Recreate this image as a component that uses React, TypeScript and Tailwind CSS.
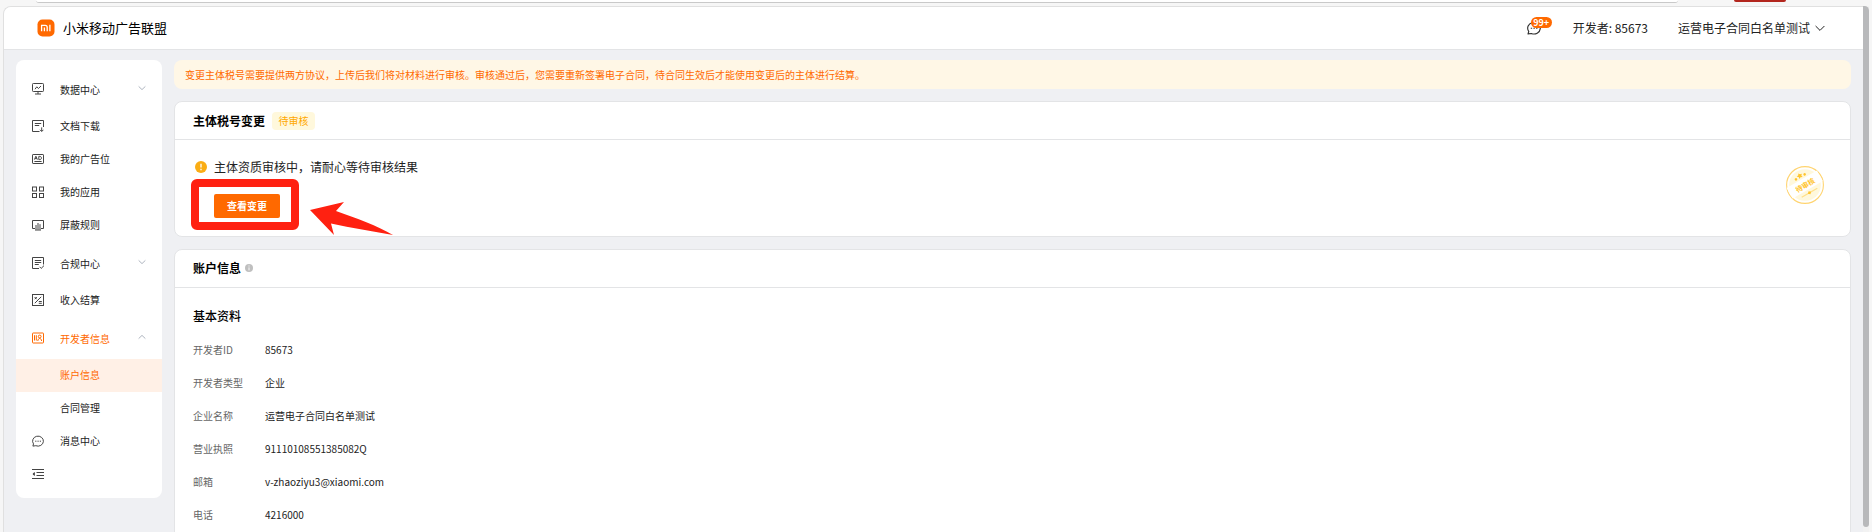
import { useState } from "react"
import type { ReactNode } from "react"

type IconProps = { children: ReactNode; className?: string }

const Icon = ({ children, className = "size-3" }: IconProps) => (
  <svg
    viewBox="0 0 12 12"
    className={`${className} shrink-0`}
    fill="none"
    stroke="currentColor"
    strokeWidth="1"
    aria-hidden="true"
  >
    {children}
  </svg>
)

const icons: Record<string, ReactNode> = {
  data: (
    <>
      <rect x="0.5" y="0.5" width="11" height="8" rx="0.8" />
      <path d="M3 6.2 4.8 3.8l1.6 1.7L9 3M6 8.500v2.500M3 11h6" />
    </>
  ),
  docs: (
    <>
      <path d="M11.500 7V0.500H0.500v11h7M2.800 3.500h6.400M2.800 5.500h4.400" />
      <path d="M9.700 7.400v3.800M8 9.800l1.700 1.700 1.700-1.700" />
    </>
  ),
  adSlot: (
    <>
      <rect x="0.5" y="1.5" width="11" height="9" rx="0.6" />
      <path d="M2.4 6.6 3.9 3.2l1.5 3.400M3 5.600h1.900M6.800 3.400v3.200h1c2.200 0 2.200-3.200 0-3.200zM2.400 8.500h7.200" />
    </>
  ),
  apps: (
    <>
      <rect x="0.5" y="1" width="4" height="4" />
      <rect x="7.5" y="1" width="4" height="4" />
      <rect x="0.5" y="7.5" width="4" height="4" />
      <rect x="7.5" y="7.5" width="4" height="4" />
    </>
  ),
  block: (
    <>
      <path d="M3 9.500H0.500V1.500h11v8H9" />
      <path d="M4 6v4.500M6 4v6.500M8 5.200v5.300M3 11h6" />
    </>
  ),
  rules: (
    <>
      <path d="M11.500 7.500V0.500H0.500v11H7M2.800 3.500h6.400M2.800 5.500h6.400M2.800 7.500h4" />
      <path d="m7.600 9.800 1.600 1.600 2.800-2.800" />
    </>
  ),
  income: (
    <>
      <rect x="0.5" y="0.5" width="11" height="11" />
      <path d="M2.800 9.200 9.200 2.800M2.600 3l2 2.200M4.800 3l-2 2.200M6.800 7.500h3M6.800 9.300h3" />
    </>
  ),
  developer: (
    <>
      <rect x="0.5" y="1" width="11" height="10" rx="0.6" />
      <path d="M2.500 3.200v5.300M4.300 3.200v5.300" />
      <circle cx="7.700" cy="4.500" r="1.400" />
      <path d="M5.800 9c.2-3.400 3.600-3.400 3.800 0" />
    </>
  ),
  message: (
    <>
      <path d="M0.900 11.100 1.500 8.900A5.400 5 0 1 1 3.800 10.700z" strokeLinejoin="round" />
      <path d="M3.200 6.200h1.200M5.500 6.200h1.200M7.800 6.200h1.200" />
    </>
  ),
  collapse: <path d="M0 1.500h12M4.500 4.500H12M4.500 7.500H12M0 10.500h12M2.400 4.600 0.900 6l1.500 1.400z" />,
}

const Chevron = ({ up = false }: { up?: boolean }) => (
  <svg viewBox="0 0 10 10" className="mb-0.5 size-2 text-gray-400" fill="none" stroke="currentColor" aria-hidden="true">
    <path d={up ? "M0.8 7 5 3l4.2 4" : "M0.8 3 5 7l4.2-4"} />
  </svg>
)

type MenuItemProps = { icon: string; label: string }

const MenuLink = ({ icon, label }: MenuItemProps) => (
  <a href="#" className="flex h-[33px] items-center gap-4 px-4 pb-0.5">
    <Icon className="size-3 text-[#444]">{icons[icon]}</Icon>
    <span>{label}</span>
  </a>
)

type MenuGroupProps = MenuItemProps & {
  open?: boolean
  onToggle: () => void
  children?: ReactNode
}

const MenuGroup = ({ icon, label, open = false, onToggle, children }: MenuGroupProps) => (
  <div>
    <button
      type="button"
      aria-expanded={open}
      onClick={onToggle}
      className={`flex h-[42px] w-full items-center gap-4 px-4 text-left ${open ? "text-[#ff6900]" : ""}`}
    >
      <Icon className={open ? "size-3" : "size-3 text-[#444]"}>{icons[icon]}</Icon>
      <span className="flex-1">{label}</span>
      <Chevron up={open} />
    </button>
    {open && children}
  </div>
)

const Sidebar = () => {
  const [openGroup, setOpenGroup] = useState("developer")

  const toggle = (name: string) => setOpenGroup(openGroup === name ? "" : name)

  return (
    <nav className="w-[146px] shrink-0 rounded-lg bg-white pt-2 pb-[7px] text-[#222]">
      <MenuGroup icon="data" label="数据中心" open={openGroup === "data"} onToggle={() => toggle("data")} />
      <MenuLink icon="docs" label="文档下载" />
      <MenuLink icon="adSlot" label="我的广告位" />
      <MenuLink icon="apps" label="我的应用" />
      <MenuLink icon="block" label="屏蔽规则" />
      <MenuGroup icon="rules" label="合规中心" open={openGroup === "rules"} onToggle={() => toggle("rules")} />
      <MenuLink icon="income" label="收入结算" />
      <MenuGroup
        icon="developer"
        label="开发者信息"
        open={openGroup === "developer"}
        onToggle={() => toggle("developer")}
      >
        <a href="#" className="flex h-[33px] items-center bg-[#fff0e6] pb-0.5 pl-11 text-[#ff6900]">
          账户信息
        </a>
        <a href="#" className="flex h-[33px] items-center pb-0.5 pl-11">
          合同管理
        </a>
      </MenuGroup>
      <MenuLink icon="message" label="消息中心" />
      <button type="button" aria-label="收起菜单" className="flex h-[33px] w-full items-center px-4 pb-0.5 text-[#444]">
        <Icon>{icons.collapse}</Icon>
      </button>
    </nav>
  )
}

const Header = () => (
  <header className="flex h-[43px] items-center border-b border-[#e3e4e6] bg-white pr-[38px] pb-px pl-[33px] text-[#222]">
    <svg viewBox="0 0 18 18" className="size-[18px]" aria-hidden="true">
      <rect x="0.5" y="0.5" width="17" height="17" rx="5" fill="#ff6900" />
      <path d="M4.600 12.200V6.400h3.600q2 0 2 2v3.800M7.400 8.600v3.600M12.900 5.800v6.400" fill="none" stroke="#fff" strokeWidth="1.300" />
    </svg>
    <h1 className="ml-2 flex-1 text-[13px] font-normal text-black">小米移动广告联盟</h1>
    <button type="button" aria-label="消息" className="relative mr-8 text-[#333]">
      <Icon className="size-[14px]">{icons.message}</Icon>
      <span className="absolute -top-1 left-1 h-[11px] w-[21px] rounded-full bg-[#ff6900] text-center text-[9px] leading-[11px] font-bold text-white">
        99+
      </span>
    </button>
    <span className="mr-[30px] text-xs">开发者: 85673</span>
    <button type="button" className="flex items-center gap-[5px] text-xs">
      运营电子合同白名单测试
      <svg viewBox="0 0 10 10" className="size-[10px]" fill="none" stroke="currentColor" aria-hidden="true">
        <path d="M0.600 3 5 7.400 9.400 3" />
      </svg>
    </button>
  </header>
)

const Stamp = () => (
  <div className="relative mt-2 size-[38px]">
    <svg viewBox="0 0 38 38" className="size-full" aria-hidden="true">
      <circle cx="19" cy="19" r="18.400" fill="#fff" stroke="#ffd470" strokeWidth="1.100" />
      <circle cx="19" cy="19" r="15.800" fill="#fff8dc" />
      <g transform="rotate(-30 19 19)">
        <rect x="1.500" y="12.500" width="35" height="12" fill="#fff" />
        <path d="m19 5.600 1 1.700 2 .3-1.500 1.400.4 2-1.900-1-1.900 1 .4-2L16 7.600l2-.3z" fill="#ffc42e" />
        <circle cx="14" cy="9.600" r="1.300" fill="#ffc42e" />
        <circle cx="24" cy="9.600" r="1.300" fill="#ffc42e" />
        <path d="M10 28h18" stroke="#ffe08a" strokeWidth="1.300" />
        <path d="m19 26.200 1.900 1.800-1.900 1.800-1.900-1.800z" fill="#ffc42e" />
      </g>
    </svg>
    <span className="absolute inset-0 flex -rotate-30 items-center justify-center text-[7px] font-bold text-[#ffc42e]">
      待审核
    </span>
  </div>
)

const TaxChangeCard = () => (
  <section className="rounded-lg border border-[#e3e4e6] bg-white">
    <div className="flex h-[38px] items-center gap-[7px] border-b border-[#e3e4e6] px-[18px]">
      <h2 className="text-xs font-bold text-black">主体税号变更</h2>
      <span className="flex h-[18px] w-[43px] items-center justify-center rounded-sm bg-[#fff8dc] text-[#ffa800]">
        待审核
      </span>
    </div>
    <div className="flex items-start justify-between py-[18px] pr-[26px] pl-5">
      <div>
        <p className="flex h-5 items-center gap-[7px] pb-0.5 text-xs text-[#222]">
          <svg viewBox="0 0 12 12" className="size-3" aria-hidden="true">
            <circle cx="6" cy="6" r="6" fill="#faad14" />
            <path d="M6 2.800v3.800M6 7.800v1.400" stroke="#fff" strokeWidth="1.300" />
          </svg>
          主体资质审核中，请耐心等待审核结果
        </p>
        <div className="relative mt-4 ml-[19px] w-fit">
          <button type="button" className="block h-6 w-[66px] rounded-xs bg-[#ff6900] pb-0.5 font-bold text-white">
            查看变更
          </button>
          {/* marker and arrow pointing at the button */}
          <div className="pointer-events-none absolute -inset-x-[23px] -top-[15px] -bottom-3 mr-1 rounded-md border-8 border-[#ff2111]" />
          <svg
            viewBox="0 0 84 34"
            className="pointer-events-none absolute top-2 left-24 h-[34px] w-[84px]"
            aria-hidden="true"
          >
            <path d="M0 8 34 0 26 9C46 16 68 24 83 33 62 29 42 26 21 21.500L24 33z" fill="#ff2111" />
          </svg>
        </div>
      </div>
      <Stamp />
    </div>
  </section>
)

const accountRows = [
  { label: "开发者ID", value: "85673" },
  { label: "开发者类型", value: "企业" },
  { label: "企业名称", value: "运营电子合同白名单测试" },
  { label: "营业执照", value: "91110108551385082Q" },
  { label: "邮箱", value: "v-zhaoziyu3@xiaomi.com" },
  { label: "电话", value: "4216000" },
]

const AccountCard = () => (
  <section className="rounded-t-lg border border-[#e3e4e6] bg-white">
    <div className="flex h-[38px] items-center gap-1 border-b border-[#e3e4e6] px-[18px] pb-px">
      <h2 className="text-xs font-bold text-black">账户信息</h2>
      <svg viewBox="0 0 8 8" className="size-2" aria-hidden="true">
        <circle cx="4" cy="4" r="4" fill="#bfbfbf" />
        <path d="M4 1.500v1M4 3.400v3" stroke="#fff" strokeWidth="0.900" />
      </svg>
    </div>
    <div className="px-[18px] py-[19px]">
      <h3 className="mb-2 text-xs leading-[18px] font-medium text-black">基本资料</h3>
      <dl>
        {accountRows.map((row) => (
          <div key={row.label} className="flex h-[33px] items-center">
            <dt className="w-[72px] text-[#666]">{row.label}</dt>
            <dd className="text-[#222]">{row.value}</dd>
          </div>
        ))}
      </dl>
    </div>
  </section>
)

const App = () => {
  return (
    <div
      lang="zh-CN"
      className="flex h-screen flex-col overflow-hidden bg-[#f6f6f6] font-['Noto_Sans_CJK_SC',sans-serif] text-[10px]"
    >
      {/* bottom edge of the browser toolbar */}
      <div className="flex h-[6px] shrink-0 items-start pr-[86px] pl-9">
        <div className="h-[3px] flex-1 rounded-b-lg border-b border-[#c9c9c9] bg-white" />
        <div className="ml-[56px] h-[2px] w-[52px] rounded-b-md border-b-2 border-[#b3261e]" />
      </div>
      <div className="flex min-h-0 flex-1 pr-[3px] pl-[3px]">
        <div className="min-w-0 flex-1 overflow-hidden rounded-tl-lg border-t border-l border-[#e0e0e0] bg-[#eff0f3]">
          <Header />
          <div className="flex items-start gap-3 py-[10px] pr-3 pl-3">
            <Sidebar />
            <main className="flex min-w-0 flex-1 flex-col gap-3">
              <p className="flex h-[29px] items-center rounded-lg bg-[#fff7e6] px-[11px] text-[#ff6900]">
                变更主体税号需要提供两方协议，上传后我们将对材料进行审核。审核通过后，您需要重新签署电子合同，待合同生效后才能使用变更后的主体进行结算。
              </p>
              <TaxChangeCard />
              <AccountCard />
            </main>
          </div>
        </div>
        <div className="flex w-[6px] flex-col bg-[#f2f2f2] pb-[5px]">
          <div className="flex-1 rounded-tr-md rounded-b-sm bg-[#b8b9bb]" />
        </div>
      </div>
    </div>
  )
}

export default App
